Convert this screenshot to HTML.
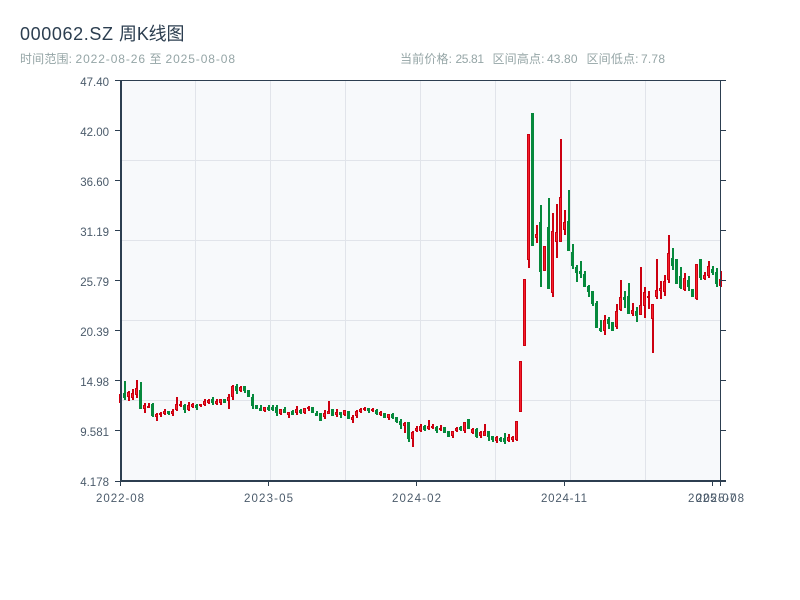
<!DOCTYPE html>
<html lang="zh">
<head>
<meta charset="utf-8">
<title>000062.SZ 周K线图</title>
<style>
html,body{margin:0;padding:0;background:#fff;width:800px;height:600px;overflow:hidden}
svg{display:block}
text{font-family:"Liberation Sans","Noto Sans CJK SC",sans-serif}
</style>
</head>
<body>
<svg width="800" height="600" viewBox="0 0 800 600" xmlns="http://www.w3.org/2000/svg">
<rect width="800" height="600" fill="#fff"/>
<text x="20" y="40" font-size="18" fill="#2c3e50" textLength="93" lengthAdjust="spacing">000062.SZ</text>
<text x="119" y="40" font-size="18" fill="#2c3e50" textLength="65.5" lengthAdjust="spacing">周K线图</text>
<g font-size="12" fill="#95a5a6">
<text x="20" y="63" textLength="52" lengthAdjust="spacing">时间范围:</text>
<text x="75.5" y="63" textLength="69.5" lengthAdjust="spacing">2022-08-26</text>
<text x="149.5" y="63">至</text>
<text x="165.5" y="63" textLength="69.5" lengthAdjust="spacing">2025-08-08</text>
<text x="400" y="63" textLength="52" lengthAdjust="spacing">当前价格:</text>
<text x="455.5" y="63" textLength="28.5" lengthAdjust="spacing">25.81</text>
<text x="492.5" y="63" textLength="52" lengthAdjust="spacing">区间高点:</text>
<text x="547" y="63" textLength="30.5" lengthAdjust="spacing">43.80</text>
<text x="586.5" y="63" textLength="52" lengthAdjust="spacing">区间低点:</text>
<text x="641" y="63" textLength="24" lengthAdjust="spacing">7.78</text>
</g>

<rect x="120" y="80" width="600" height="400" fill="#f7f9fb"/>
<g shape-rendering="crispEdges">
<path fill="none" stroke="#e1e4ea" d="M195.5 81V480M270.5 81V480M345.5 81V480M420.5 81V480M495.5 81V480M570.5 81V480M645.5 81V480M121 160.5H720M121 240.5H720M121 320.5H720M121 400.5H720"/>

<rect x="119" y="394" width="2" height="9" fill="#d0000f"/>

<path fill="none" stroke="#06893c" stroke-width="2" d="M125 381V400M141 382V409M153 403V417M169 411V415M185 404V413M197 404V410M213 397V405M237 384V394M245 386V393M253 394V409M261 405V411M269 405V411M273 405V411M277 405V416M285 407V413M293 410V415M301 409V414M317 411V416M341 412V418M369 408V413M377 409V415M393 413V419M397 417V423M401 419V429M409 422V442M425 425V431M437 426V433M461 426V431M477 428V438M489 431V441M493 436V442M501 437V442M505 433V444M541 205V287M549 198V289M569 190V251M573 244V269M577 265V282M581 261V278M585 271V287M589 285V297M593 291V306M597 301V328M601 320V332M609 317V329M625 291V308M629 283V314M637 307V322M673 248V270M681 267V289M689 276V291M701 259V280M713 266V275M717 268V287"/>
<path fill="#06893c" stroke="#06893c" d="M123.5 393.5h2V397.5h-2zM139.5 390.5h2V408.5h-2zM151.5 404.5h2V415.5h-2zM167.5 411.5h2V413.5h-2zM183.5 405.5h2V409.5h-2zM195.5 405.5h2V407.5h-2zM211.5 399.5h2V402.5h-2zM223.5 399.5h2V402.5h-2zM235.5 386.5h2V390.5h-2zM243.5 386.5h2V390.5h-2zM247.5 390.5h2V396.5h-2zM251.5 397.5h2V405.5h-2zM255.5 405.5h2V408.5h-2zM259.5 408.5h2V410.5h-2zM267.5 407.5h2V409.5h-2zM271.5 407.5h2V409.5h-2zM275.5 407.5h2V412.5h-2zM283.5 409.5h2V412.5h-2zM291.5 411.5h2V414.5h-2zM299.5 410.5h2V412.5h-2zM311.5 407.5h2V412.5h-2zM315.5 413.5h2V415.5h-2zM319.5 413.5h2V420.5h-2zM331.5 409.5h2V415.5h-2zM339.5 412.5h2V414.5h-2zM347.5 411.5h2V418.5h-2zM367.5 408.5h2V410.5h-2zM375.5 410.5h2V413.5h-2zM383.5 413.5h2V417.5h-2zM391.5 414.5h2V417.5h-2zM395.5 417.5h2V421.5h-2zM399.5 421.5h2V424.5h-2zM407.5 422.5h2V438.5h-2zM423.5 426.5h2V429.5h-2zM435.5 427.5h2V430.5h-2zM443.5 427.5h2V432.5h-2zM447.5 431.5h2V436.5h-2zM459.5 427.5h2V429.5h-2zM467.5 419.5h2V428.5h-2zM475.5 429.5h2V436.5h-2zM487.5 431.5h2V436.5h-2zM491.5 436.5h2V439.5h-2zM499.5 438.5h2V440.5h-2zM503.5 438.5h2V441.5h-2zM531.5 113.5h2V245.5h-2zM539.5 222.5h2V271.5h-2zM547.5 227.5h2V288.5h-2zM567.5 221.5h2V250.5h-2zM571.5 252.5h2V265.5h-2zM575.5 267.5h2V272.5h-2zM579.5 271.5h2V273.5h-2zM583.5 274.5h2V286.5h-2zM587.5 286.5h2V291.5h-2zM591.5 291.5h2V303.5h-2zM595.5 303.5h2V327.5h-2zM599.5 328.5h2V330.5h-2zM607.5 319.5h2V323.5h-2zM611.5 322.5h2V330.5h-2zM623.5 297.5h2V299.5h-2zM627.5 296.5h2V313.5h-2zM635.5 311.5h2V315.5h-2zM671.5 258.5h2V265.5h-2zM675.5 259.5h2V283.5h-2zM679.5 276.5h2V287.5h-2zM687.5 280.5h2V286.5h-2zM691.5 289.5h2V296.5h-2zM699.5 259.5h2V277.5h-2zM711.5 269.5h2V272.5h-2zM715.5 272.5h2V283.5h-2z"/>

<path fill="none" stroke="#cc0010" stroke-width="2" d="M129 391V401M133 389V400M137 380V398M145 403V413M149 403V408M157 413V421M161 412V417M165 409V415M173 409V416M177 397V411M181 401V407M189 402V411M193 403V408M201 404V407M205 399V406M209 399V404M217 399V405M221 399V405M229 394V409M233 385V400M241 386V392M265 407V412M281 409V415M289 412V418M297 406V415M305 408V414M309 406V411M325 410V419M329 401V414M337 409V417M345 410V416M353 415V423M357 410V418M361 408V413M365 407V411M373 408V412M381 411V416M389 414V420M405 422V433M413 431V447M417 426V432M421 424V432M429 420V430M433 424V429M441 425V431M453 431V438M457 427V432M465 422V433M473 428V434M481 431V438M485 424V436M497 436V443M509 434V442M513 436V442M517 421V441M529 134V268M537 225V243M553 213V297M557 204V258M561 139V242M565 210V235M605 315V335M617 304V329M621 280V311M633 303V316M641 267V315M645 287V318M649 291V309M653 304V353M657 259V299M661 281V299M665 275V296M669 235V283M685 273V291M697 264V300M705 272V280M709 261V278M721 271V287"/>
<path fill="#f4202c" stroke="#cc0010" d="M127.5 392.5h2V396.5h-2zM131.5 393.5h2V397.5h-2zM135.5 388.5h2V394.5h-2zM143.5 405.5h2V408.5h-2zM147.5 406.5h2V407.5h-2zM155.5 414.5h2V416.5h-2zM159.5 413.5h2V414.5h-2zM163.5 411.5h2V413.5h-2zM171.5 411.5h2V413.5h-2zM175.5 404.5h2V409.5h-2zM179.5 404.5h2V405.5h-2zM187.5 405.5h2V409.5h-2zM191.5 404.5h2V406.5h-2zM199.5 404.5h2V405.5h-2zM203.5 401.5h2V404.5h-2zM207.5 400.5h2V402.5h-2zM215.5 401.5h2V403.5h-2zM219.5 399.5h2V402.5h-2zM227.5 397.5h2V400.5h-2zM231.5 386.5h2V396.5h-2zM239.5 387.5h2V390.5h-2zM263.5 407.5h2V410.5h-2zM279.5 409.5h2V413.5h-2zM287.5 412.5h2V414.5h-2zM295.5 409.5h2V412.5h-2zM303.5 408.5h2V412.5h-2zM307.5 407.5h2V408.5h-2zM323.5 413.5h2V416.5h-2zM327.5 411.5h2V413.5h-2zM335.5 412.5h2V414.5h-2zM343.5 410.5h2V414.5h-2zM351.5 417.5h2V419.5h-2zM355.5 411.5h2V415.5h-2zM359.5 409.5h2V411.5h-2zM363.5 408.5h2V409.5h-2zM371.5 409.5h2V410.5h-2zM379.5 412.5h2V414.5h-2zM387.5 414.5h2V417.5h-2zM403.5 423.5h2V425.5h-2zM411.5 432.5h2V438.5h-2zM415.5 428.5h2V430.5h-2zM419.5 426.5h2V430.5h-2zM427.5 426.5h2V428.5h-2zM431.5 426.5h2V427.5h-2zM439.5 428.5h2V429.5h-2zM451.5 431.5h2V435.5h-2zM455.5 428.5h2V430.5h-2zM463.5 422.5h2V430.5h-2zM471.5 429.5h2V432.5h-2zM479.5 432.5h2V435.5h-2zM483.5 431.5h2V435.5h-2zM495.5 437.5h2V440.5h-2zM507.5 437.5h2V440.5h-2zM511.5 437.5h2V439.5h-2zM515.5 421.5h2V439.5h-2zM519.5 361.5h2V411.5h-2zM523.5 279.5h2V345.5h-2zM527.5 134.5h2V259.5h-2zM535.5 234.5h2V237.5h-2zM543.5 246.5h2V270.5h-2zM551.5 231.5h2V292.5h-2zM555.5 232.5h2V241.5h-2zM559.5 197.5h2V241.5h-2zM563.5 222.5h2V229.5h-2zM603.5 320.5h2V330.5h-2zM615.5 311.5h2V326.5h-2zM619.5 297.5h2V309.5h-2zM631.5 310.5h2V313.5h-2zM639.5 305.5h2V314.5h-2zM643.5 292.5h2V305.5h-2zM647.5 296.5h2V297.5h-2zM651.5 304.5h2V318.5h-2zM655.5 290.5h2V296.5h-2zM659.5 288.5h2V290.5h-2zM663.5 281.5h2V291.5h-2zM667.5 253.5h2V279.5h-2zM683.5 278.5h2V289.5h-2zM695.5 264.5h2V298.5h-2zM703.5 275.5h2V278.5h-2zM707.5 266.5h2V275.5h-2zM719.5 279.5h2V285.5h-2z"/>

<g fill="#2c3e50">
<rect x="120" y="80" width="606" height="1"/>
<rect x="120" y="480" width="606" height="2"/>
<rect x="120" y="80" width="2" height="402"/>
<rect x="720" y="80" width="1" height="402"/>
<path d="M115 80h5v1h-5zM115 130h5v1h-5zM115 180h5v1h-5zM115 230h5v1h-5zM115 280h5v1h-5zM115 330h5v1h-5zM115 380h5v1h-5zM115 430h5v1h-5zM115 481h5v1h-5z"/>
<path d="M721 130h5v1h-5zM721 180h5v1h-5zM721 230h5v1h-5zM721 280h5v1h-5zM721 330h5v1h-5zM721 380h5v1h-5zM721 430h5v1h-5z"/>
<path d="M120 482h1v4h-1zM268 482h1v4h-1zM416 482h1v4h-1zM564 482h1v4h-1zM712 482h1v4h-1zM720 482h1v4h-1z"/>
</g>
</g>

<g font-size="11.5" fill="#4b5b6b" text-anchor="end">
<text x="109" y="86">47.40</text>
<text x="109" y="136">42.00</text>
<text x="109" y="186">36.60</text>
<text x="109" y="236">31.19</text>
<text x="109" y="286">25.79</text>
<text x="109" y="336">20.39</text>
<text x="109" y="386">14.98</text>
<text x="109" y="436">9.581</text>
<text x="109" y="486">4.178</text>
</g>
<g font-size="11.5" fill="#4b5b6b">
<text x="96" y="502" textLength="48" lengthAdjust="spacing">2022-08</text>
<text x="244" y="502" textLength="49" lengthAdjust="spacing">2023-05</text>
<text x="392" y="502" textLength="49" lengthAdjust="spacing">2024-02</text>
<text x="541" y="502" textLength="46" lengthAdjust="spacing">2024-11</text>
<text x="688" y="502" textLength="48" lengthAdjust="spacing">2025-07</text>
<text x="696" y="502" textLength="48" lengthAdjust="spacing">2025-08</text>
</g>
</svg>
</body>
</html>
